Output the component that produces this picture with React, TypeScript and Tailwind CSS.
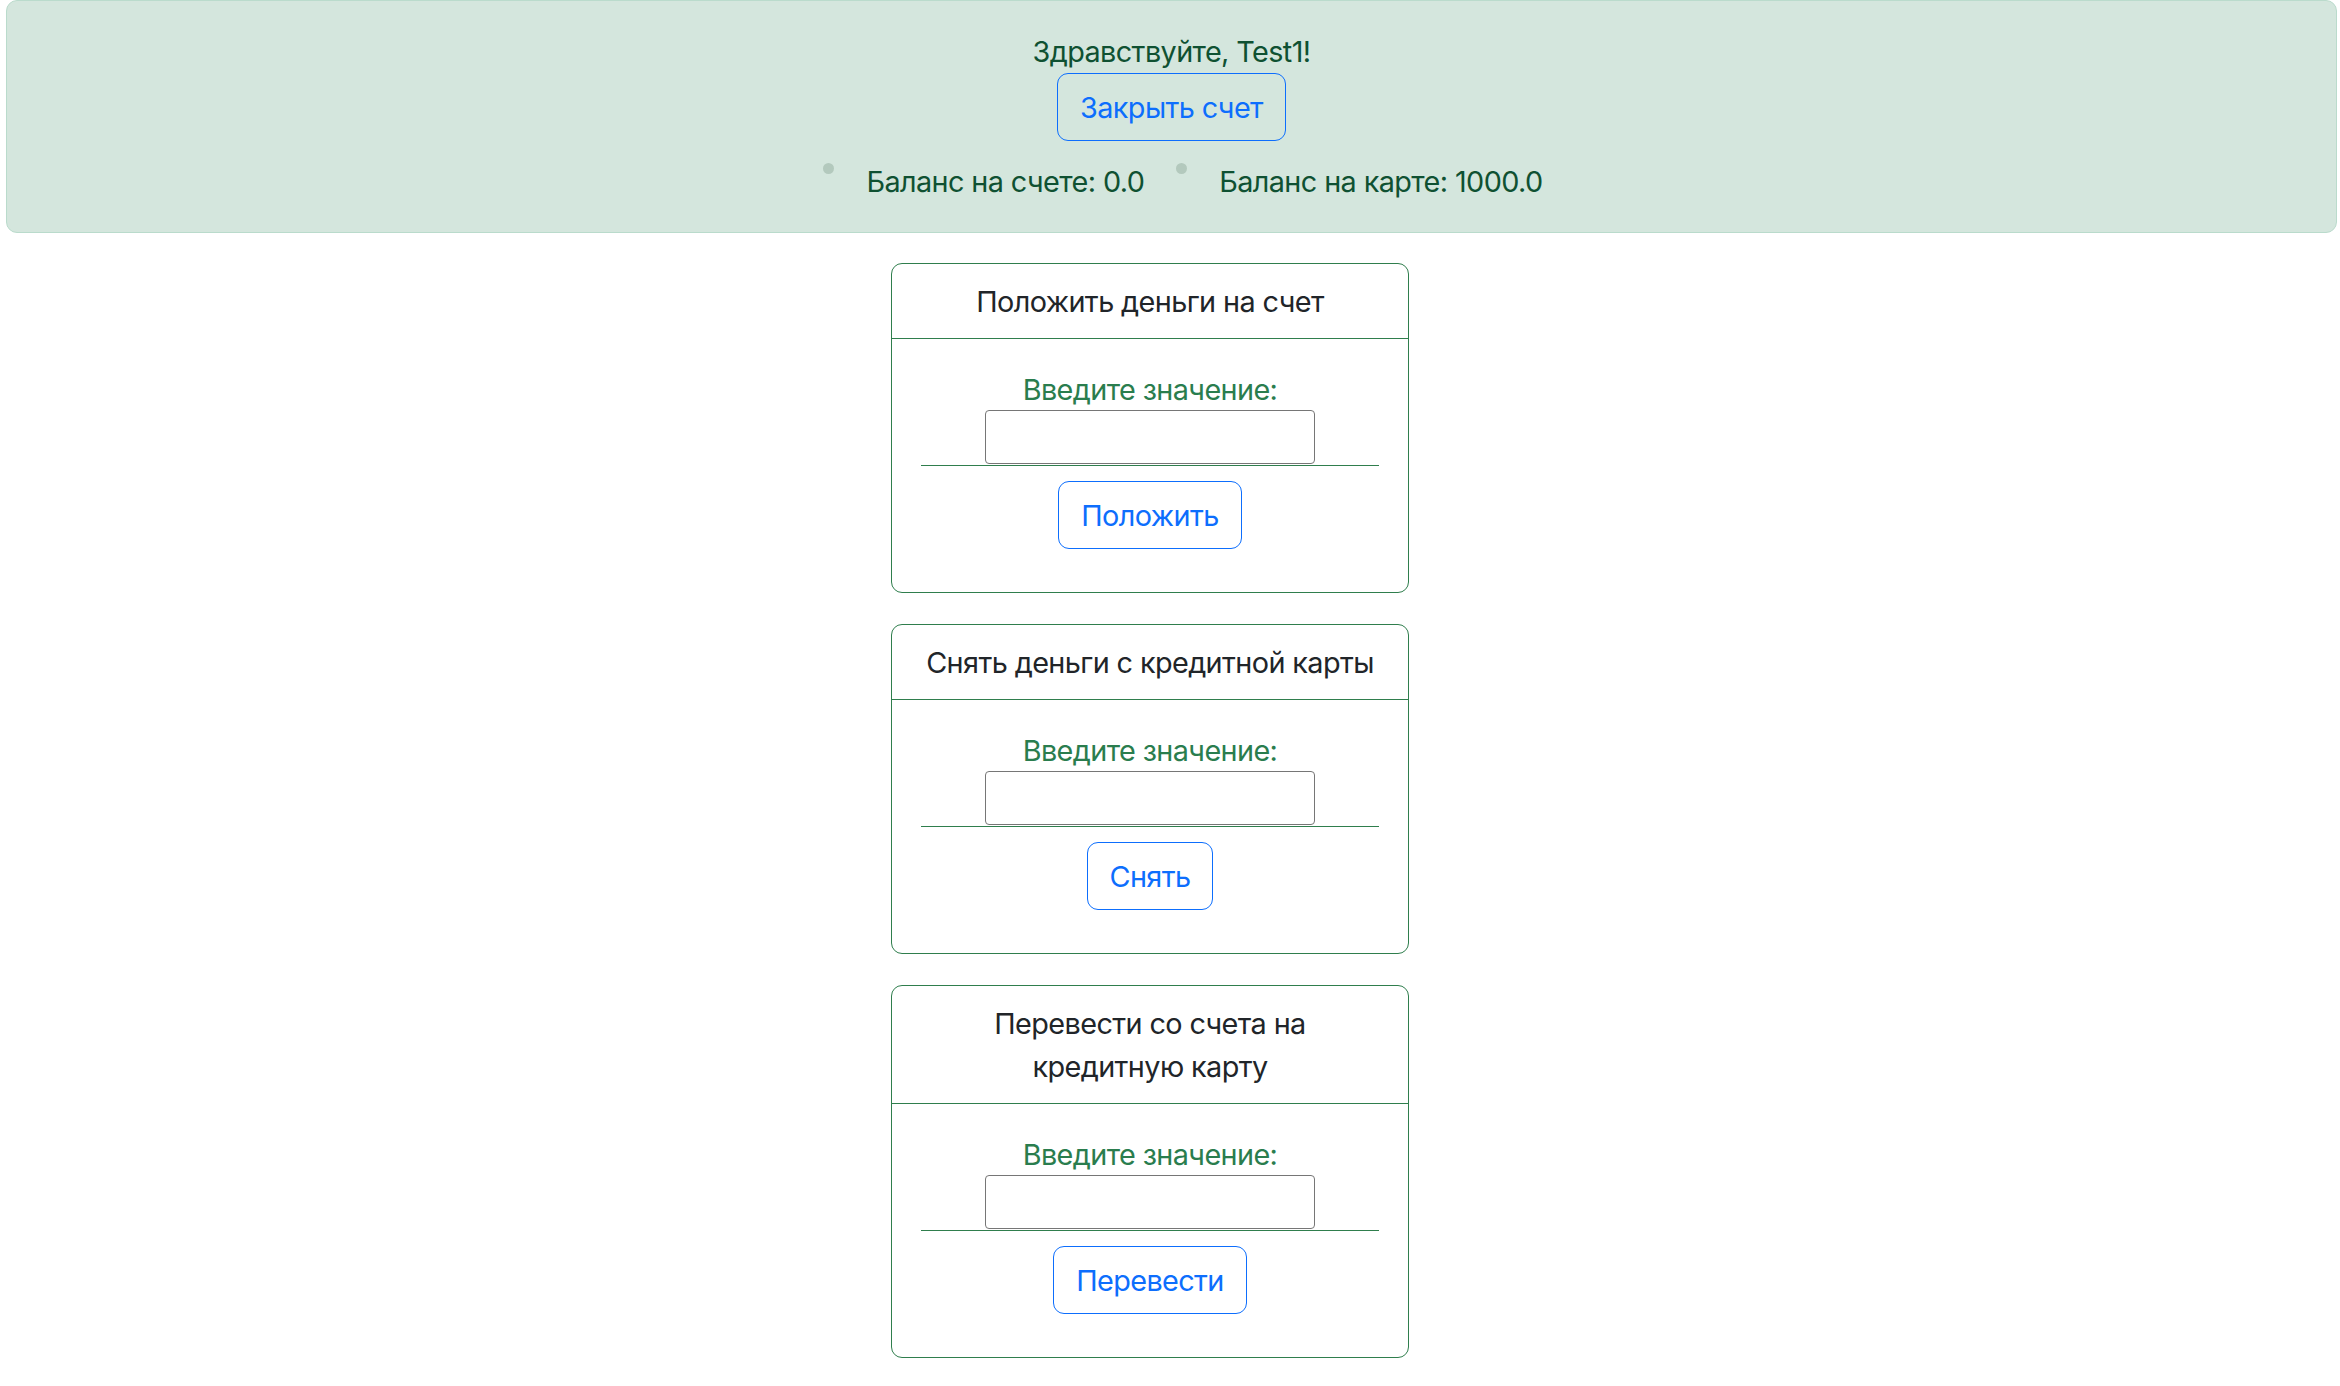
import React from "react";

const font = "font-['Inter','Noto_Sans',sans-serif] tracking-[-0.6px]";

interface ActionCardProps {
  title: React.ReactNode;
  action: string;
}

const ActionCard = ({ title, action }: ActionCardProps) => {
  return (
    <div className="w-[518px] rounded-[11px] border border-[#2f7e4d] bg-white">
      <div className="border-b border-[#2f7e4d] px-[29px] pb-[15px] pt-[16px] text-center text-[28.8px] leading-[43px] text-[#212529]">
        {title}
      </div>
      <div className="flex flex-col items-center px-[29px] pb-[43px] pt-[30px]">
        <label className="text-[28.8px] leading-[41px] text-[#2a7d4e]">Введите значение:</label>
        <div className="flex w-full justify-center border-b border-[#2f7e4d] pb-[1px]">
          <input className="h-[54px] w-[330px] rounded-[4px] border border-[#767676] bg-white outline-none" />
        </div>
        <button className="mt-[15px] h-[68px] rounded-[11px] border border-[#0d6efd] px-[22px] text-[28.8px] leading-[43px] text-[#0d6efd]">
          {action}
        </button>
      </div>
    </div>
  );
};

export default function App() {
  return (
    <div className={`min-h-screen bg-white ${font}`}>
      <div className="ml-[6px] mr-[3px] rounded-[11px] border border-[#badbcc] bg-[#d4e6dd] px-[29px] pb-[29px] pt-[29px] text-center text-[28.8px] leading-[43px] text-[#0f5132]">
        <div>Здравствуйте, Test1!</div>
        <button className="h-[68px] rounded-[11px] border border-[#0d6efd] px-[22px] text-[28.8px] leading-[43px] text-[#0d6efd]">
          Закрыть счет
        </button>
        <div className="mt-[19px] flex items-start justify-center gap-[32px] pl-[23px]">
          <span className="mt-[3px] h-[11px] w-[11px] rounded-full bg-[#b3c9bd]" />
          <span>Баланс на счете: 0.0</span>
          <span className="mt-[3px] h-[11px] w-[11px] rounded-full bg-[#b3c9bd]" />
          <span>Баланс на карте: 1000.0</span>
        </div>
      </div>

      <div className="flex flex-col items-center gap-[31px] pb-[30px] pr-[40px] pt-[30px]">
        <ActionCard title="Положить деньги на счет" action="Положить" />
        <ActionCard title="Снять деньги с кредитной карты" action="Снять" />
        <ActionCard
          title={
            <>
              Перевести со счета на
              <br />
              кредитную карту
            </>
          }
          action="Перевести"
        />
      </div>
    </div>
  );
}
